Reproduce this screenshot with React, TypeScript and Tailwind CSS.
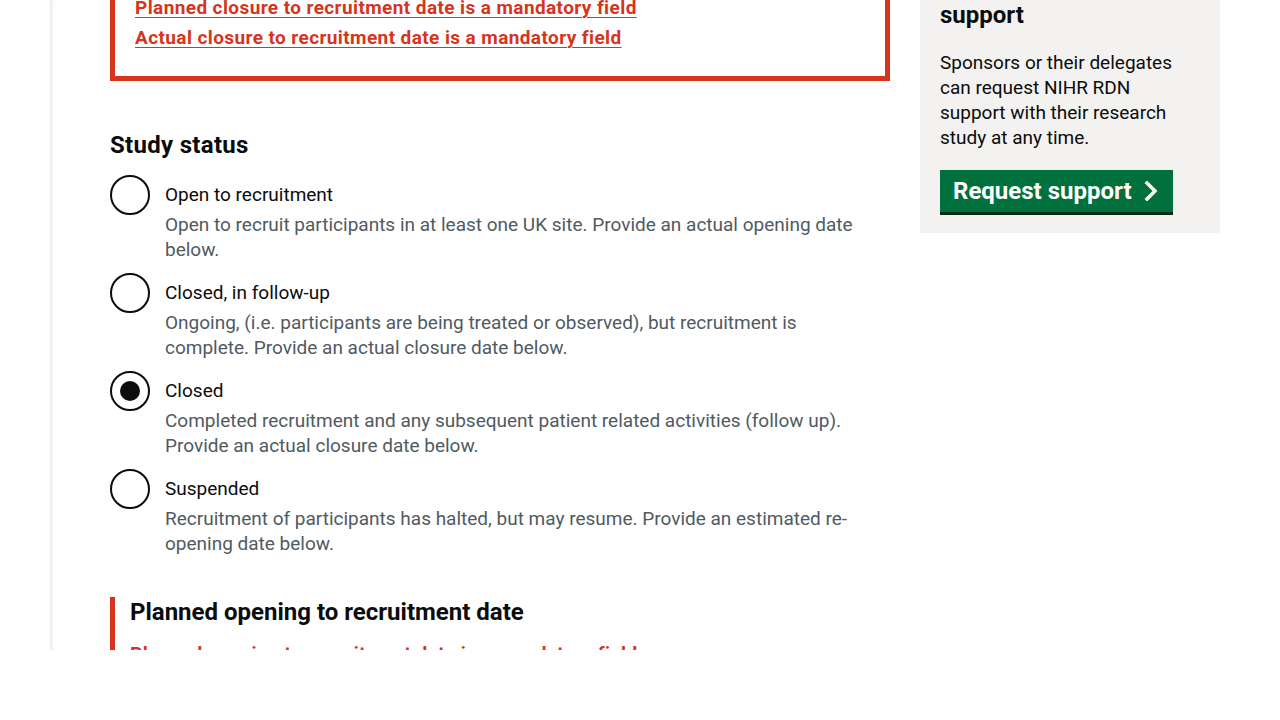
import React from "react";

const errorLinks = [
  "Planned opening to recruitment date is a mandatory field",
  "Actual opening to recruitment date is a mandatory field",
  "Planned closure to recruitment date is a mandatory field",
  "Actual closure to recruitment date is a mandatory field",
];

const statuses = [
  {
    label: "Open to recruitment",
    hint: "Open to recruit participants in at least one UK site. Provide an actual opening date below.",
  },
  {
    label: "Closed, in follow-up",
    hint: "Ongoing, (i.e. participants are being treated or observed), but recruitment is complete. Provide an actual closure date below.",
  },
  {
    label: "Closed",
    hint: "Completed recruitment and any subsequent patient related activities (follow up). Provide an actual closure date below.",
  },
  {
    label: "Suspended",
    hint: "Recruitment of participants has halted, but may resume. Provide an estimated re-opening date below.",
  },
];

function Radio({ checked }: { checked: boolean }) {
  return (
    <span className="flex h-[40px] w-[40px] shrink-0 items-center justify-center rounded-full border-2 border-[#0b0c0c] bg-white">
      {checked && <span className="h-[20px] w-[20px] rounded-full bg-[#0b0c0c]" />}
    </span>
  );
}

export default function App() {
  const selected = "Closed";

  return (
    <div className="h-[650px] overflow-hidden bg-white font-['Roboto','Liberation_Sans',sans-serif] text-[#0b0c0c]">
      <div className="ml-[50px] mr-[50px] flex h-full gap-[30px] pl-[60px] shadow-[inset_5px_0_4px_-3px_rgba(0,0,0,0.09)]">
        <main className="w-[780px] shrink-0">
          <div className="-mt-[130px] border-[5px] border-[#d4351c] px-[20px] pt-[15px] pb-[21px]">
            <h2 className="mb-[15px] text-[24px] font-bold leading-[30px]">There is a problem</h2>
            <ul>
              {errorLinks.map((t) => (
                <li key={t} className="mb-[5px] text-[19px] font-bold leading-[25px] tracking-[0.4px]">
                  <a href="#" className="text-[#d4351c] underline decoration-1 underline-offset-[3px]">
                    {t}
                  </a>
                </li>
              ))}
            </ul>
          </div>

          <fieldset className="mt-[49px]">
            <legend className="mb-[15px] text-[24px] font-bold leading-[30px] tracking-[0.3px]">Study status</legend>
            {statuses.map((s) => (
              <div key={s.label} className="mb-[11px] flex">
                <Radio checked={s.label === selected} />
                <div className="px-[15px]">
                  <div className="pt-[7px] pb-[5px] text-[19px] leading-[25px]">{s.label}</div>
                  <div className="text-[19px] leading-[25px] text-[#505a5f]">{s.hint}</div>
                </div>
              </div>
            ))}
          </fieldset>

          <div className="mt-[30px] border-l-[5px] border-[#d4351c] pl-[15px]">
            <h2 className="text-[24px] font-bold leading-[30px]">Planned opening to recruitment date</h2>
            <p className="mt-[14px] text-[19px] font-bold leading-[25px] tracking-[0.4px] text-[#d4351c]">
              Planned opening to recruitment date is a mandatory field
            </p>
          </div>
        </main>

        <aside className="w-[300px] shrink-0">
          <div className="-mt-[50px] bg-[#f3f2f1] px-[20px] pt-[20px] pb-[21px]">
            <h2 className="mb-[20px] text-[24px] font-bold leading-[30px]">Request NIHR RDN support</h2>
            <p className="mb-[20px] text-[19px] leading-[25px]">
              Sponsors or their delegates can request NIHR RDN support with their research study at any time.
            </p>
            <a
              href="#"
              className="inline-flex h-[42px] items-center gap-[12px] bg-[#00703c] pl-[13px] pr-[15px] text-[24px] font-bold leading-[30px] text-white shadow-[0_3px_0_#002d18]"
            >
              Request support
              <svg width="14" height="20" viewBox="0 0 14 20" fill="none">
                <polyline points="3,2 11,10 3,18" stroke="white" strokeWidth="3.5" strokeLinecap="square" />
              </svg>
            </a>
          </div>
        </aside>
      </div>
    </div>
  );
}
